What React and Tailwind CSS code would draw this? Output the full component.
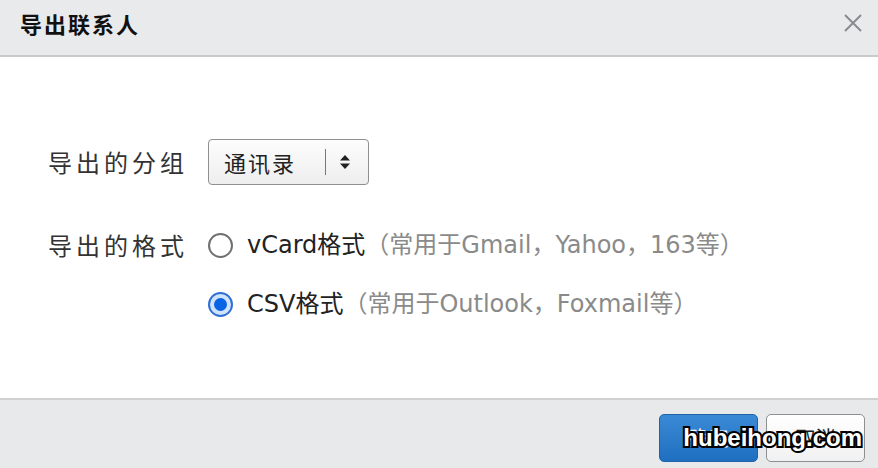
export default function App() {
  const font = { fontFamily: '"DejaVu Sans", "Noto Sans CJK SC", sans-serif' }
  const cjk = { fontFamily: '"Noto Sans CJK SC", sans-serif' }

  return (
    <div className="flex h-[468px] w-[878px] flex-col bg-white text-[#222]" style={font}>
      <div className="flex h-[57px] shrink-0 items-start justify-between border-b-2 border-[#c9cacc] bg-[#e9eaec] pl-[20px] pr-[14px] pt-[10px]">
        <div className="text-[22px] font-bold leading-[26px] tracking-[2px] text-[#111]" style={cjk}>
          导出联系人
        </div>
        <svg width="22" height="22" viewBox="0 0 22 22" className="mt-[2px]">
          <path d="M3 3 L19 19 M19 3 L3 19" stroke="#8a8b8d" strokeWidth="2" />
        </svg>
      </div>

      <div className="flex flex-1 flex-col pl-[48px] pt-[82px]">
        <div className="flex h-[46px] items-center">
          <div className="w-[160px] text-[24px] tracking-[4px] text-[#333]" style={cjk}>导出的分组</div>
          <div className="flex h-[46px] w-[161px] items-center rounded-[4px] border border-[#8e8f91] bg-gradient-to-b from-[#fdfdfd] to-[#eeeeee] pl-[15px]">
            <span className="w-[101px] text-[22px] tracking-[2px] text-[#222]" style={cjk}>通讯录</span>
            <span className="h-[26px] w-px bg-[#777]" />
            <svg width="12" height="18" viewBox="0 0 12 18" className="ml-[13px]">
              <path d="M6 2 L11 7.5 H1 Z M6 16 L11 10.5 H1 Z" fill="#222" />
            </svg>
          </div>
        </div>

        <div className="mt-[40px] flex h-[40px] items-center">
          <div className="w-[160px] text-[24px] tracking-[4px] text-[#333]" style={cjk}>导出的格式</div>
          <span className="h-[25px] w-[25px] rounded-full border-2 border-[#707070] bg-white" />
          <span className="ml-[14px] text-[24px] text-[#222]">vCard格式</span>
          <span className="text-[24px] text-[#8a8a8a]">（常用于Gmail，Yahoo，163等）</span>
        </div>

        <div className="mt-[19px] flex h-[40px] items-center pl-[160px]">
          <span className="flex h-[25px] w-[25px] items-center justify-center rounded-full border-2 border-[#2f6fd6] bg-[#cfe3fb]">
            <span className="h-[13px] w-[13px] rounded-full bg-[#0a63e4]" />
          </span>
          <span className="ml-[14px] text-[24px] text-[#222]">CSV格式</span>
          <span className="text-[24px] text-[#8a8a8a]">（常用于Outlook，Foxmail等）</span>
        </div>
      </div>

      <div className="relative flex h-[70px] shrink-0 items-start justify-end gap-[8px] border-t-2 border-[#cfd0d2] bg-[#e8e9eb] pr-[13px] pt-[14px]">
        <button className="h-[48px] w-[99px] rounded-[5px] border border-[#1f63a8] bg-gradient-to-b from-[#3a8ad6] to-[#1e6fc0] text-[20px] text-white" style={cjk}>
          确定
        </button>
        <button className="h-[48px] w-[99px] rounded-[5px] border border-[#8e8f91] bg-gradient-to-b from-white to-[#f1f1f1] text-[20px] text-[#222]" style={cjk}>
          取消
        </button>
        <div
          className="absolute right-[16px] top-[26px] text-[24px] font-black leading-none text-white"
          style={{ fontFamily: '"Liberation Sans", sans-serif', WebkitTextStroke: '4px #000', paintOrder: 'stroke fill' }}
        >
          hubeihong.com
        </div>
      </div>
    </div>
  )
}
